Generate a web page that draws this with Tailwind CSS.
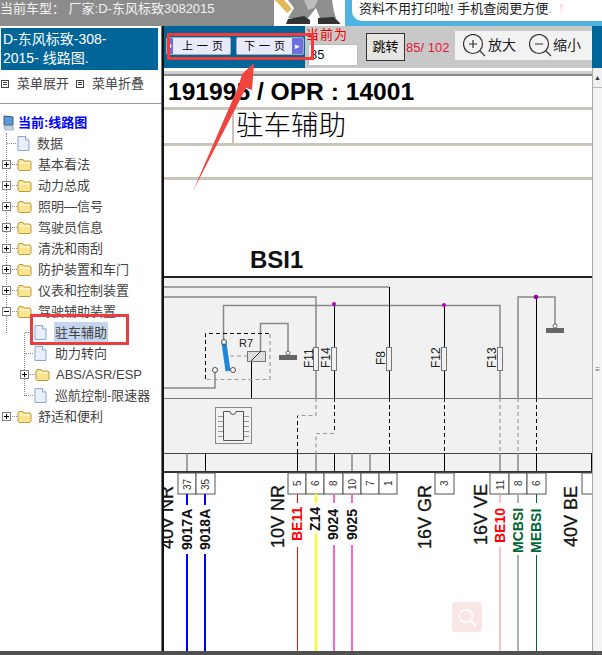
<!DOCTYPE html>
<html lang="en">
<head>
<meta charset="UTF-8" />
<title>线路图</title>
<script src="https://cdn.jsdelivr.net/npm/@tailwindcss/browser@4"></script>
</head>
<body class="relative w-[602px] h-[655px] overflow-hidden bg-white font-['Liberation_Sans','Noto_Sans_CJK_SC',sans-serif]">
  <svg class="hidden">
    <symbol id="folder" viewBox="0 0 15 13">
      <path d="M1 3 L2 1.5 H6 L7 3 H13 L14 4 V11.5 L13 12.5 H2 L1 11.5 Z" fill="#fbe48f" stroke="#c09a35" stroke-width="1"/>
      <path d="M2 5 H13" stroke="#fff6c8" stroke-width="1.5"/>
    </symbol>
    <symbol id="doc" viewBox="0 0 13 15">
      <path d="M1 .5 H8.5 L12 4 V14.5 H1 Z" fill="#e8effa" stroke="#8aa6d2" stroke-width="1"/>
      <path d="M8.5 .5 V4 H12" fill="#fff" stroke="#8aa6d2" stroke-width="1"/>
    </symbol>
    <symbol id="plus" viewBox="0 0 9 9">
      <rect x=".5" y=".5" width="8" height="8" fill="#fff" stroke="#808080"/>
      <path d="M2 4.5 H7 M4.5 2 V7" stroke="#000"/>
    </symbol>
    <symbol id="minus" viewBox="0 0 9 9">
      <rect x=".5" y=".5" width="8" height="8" fill="#fff" stroke="#808080"/>
      <path d="M2 4.5 H7" stroke="#000"/>
    </symbol>
    <symbol id="menu" viewBox="0 0 8 8">
      <rect x=".5" y=".5" width="7" height="7" fill="#fff" stroke="#444"/>
      <path d="M2 2.5 H6 M2 4.5 H6" stroke="#444"/>
    </symbol>
  </svg>

  <!-- top bar -->
  <div class="flex h-[26px]">
    <div class="w-[274px] bg-[#8c8c8c] text-[#f2f2f2] text-[13px] leading-[18px] whitespace-nowrap">当前车型： 厂家:D-东风标致3082015</div>
    <div class="w-[71px] bg-white">
      <svg width="71" height="26" viewBox="0 0 71 26">
        <path d="M0 0 H10 L18 9 L13 13 L4 3 Z" fill="#e2b95a"/>
        <path d="M14 0 H58 L60 12 L62 18 H46 L42 8 L34 18 H14 L20 8 Z" fill="#8e8e8e"/>
        <path d="M30 0 H44 L40 8 L34 10 Z" fill="#bdbdbd"/>
        <path d="M12 24 L14 19 L30 16 L36 20 V24 Z M44 24 V18 L60 17 L66 23 V24 Z" fill="#333"/>
      </svg>
    </div>
    <div class="flex-1 bg-[#4fb2e0] pl-[7px] pb-[5px]">
      <div class="h-full bg-white rounded-bl-[10px] pl-[7px] text-[13px] leading-[17px] text-[#222] whitespace-nowrap">资料不用打印啦! 手机查阅更方便<span class="text-[#aaa]">.</span> <span class="ml-[4px] text-[#f9c0ee]">!</span></div>
    </div>
  </div>

  <div class="flex h-[625px]">
    <!-- left menu -->
    <div class="w-[161px] shrink-0 bg-white">
      <div class="ml-[1px] mt-[2px] w-[157px] h-[42px] bg-[#006699] text-white text-[14px] leading-[19px] pl-[2px] pt-[2px] whitespace-nowrap">D-东风标致-308-<br>2015- 线路图.</div>
      <div class="flex items-center h-[27px] pl-[1px] text-[13px] text-[#444]">
        <svg class="mr-[8px]" width="8" height="8"><use href="#menu"/></svg>菜单展开
        <svg class="ml-[7px] mr-[8px]" width="8" height="8"><use href="#menu"/></svg>菜单折叠
      </div>
      <div class="relative mt-[6px] border-t border-[#999] pt-[8px] text-[13px] leading-[21px] text-[#444] whitespace-nowrap">
        <!-- tree guide lines -->
        <div class="absolute left-[6px] top-[29px] h-[200px] border-l border-dotted border-[#888]"></div>
        <div class="absolute left-[24px] top-[229px] h-[63px] border-l border-dotted border-[#888]"></div>

        <div class="flex items-center h-[21px] pl-[2px] text-[#0000ff] font-bold">
          <svg class="mr-[3px]" width="13" height="16" viewBox="0 0 13 16"><path d="M2 1 L11 2 V10 L2 10 Z" fill="#5b9be0" stroke="#456"/><path d="M2 11 L11 11 L12 15 H3 Z" fill="#c9d4e6" stroke="#8899aa" stroke-width=".6"/></svg>当前:线路图
        </div>
        <div class="relative flex items-center h-[21px] pl-[17px]"><span class="absolute left-[7px] w-[9px] border-t border-dotted border-[#888]"></span><svg class="mr-[7px]" width="13" height="15"><use href="#doc"/></svg>数据</div>
        <div class="flex items-center h-[21px] pl-[2px]"><svg class="relative mr-[1px]" width="9" height="9"><use href="#plus"/></svg><span class="w-[5px] border-t border-dotted border-[#888]"></span><svg class="mr-[6px]" width="15" height="13"><use href="#folder"/></svg>基本看法</div>
        <div class="flex items-center h-[21px] pl-[2px]"><svg class="relative mr-[1px]" width="9" height="9"><use href="#plus"/></svg><span class="w-[5px] border-t border-dotted border-[#888]"></span><svg class="mr-[6px]" width="15" height="13"><use href="#folder"/></svg>动力总成</div>
        <div class="flex items-center h-[21px] pl-[2px]"><svg class="relative mr-[1px]" width="9" height="9"><use href="#plus"/></svg><span class="w-[5px] border-t border-dotted border-[#888]"></span><svg class="mr-[6px]" width="15" height="13"><use href="#folder"/></svg>照明—信号</div>
        <div class="flex items-center h-[21px] pl-[2px]"><svg class="relative mr-[1px]" width="9" height="9"><use href="#plus"/></svg><span class="w-[5px] border-t border-dotted border-[#888]"></span><svg class="mr-[6px]" width="15" height="13"><use href="#folder"/></svg>驾驶员信息</div>
        <div class="flex items-center h-[21px] pl-[2px]"><svg class="relative mr-[1px]" width="9" height="9"><use href="#plus"/></svg><span class="w-[5px] border-t border-dotted border-[#888]"></span><svg class="mr-[6px]" width="15" height="13"><use href="#folder"/></svg>清洗和雨刮</div>
        <div class="flex items-center h-[21px] pl-[2px]"><svg class="relative mr-[1px]" width="9" height="9"><use href="#plus"/></svg><span class="w-[5px] border-t border-dotted border-[#888]"></span><svg class="mr-[6px]" width="15" height="13"><use href="#folder"/></svg>防护装置和车门</div>
        <div class="flex items-center h-[21px] pl-[2px]"><svg class="relative mr-[1px]" width="9" height="9"><use href="#plus"/></svg><span class="w-[5px] border-t border-dotted border-[#888]"></span><svg class="mr-[6px]" width="15" height="13"><use href="#folder"/></svg>仪表和控制装置</div>
        <div class="flex items-center h-[21px] pl-[2px]"><svg class="relative mr-[1px]" width="9" height="9"><use href="#minus"/></svg><span class="w-[5px] border-t border-dotted border-[#888]"></span><svg class="mr-[6px]" width="15" height="13"><use href="#folder"/></svg>驾驶辅助装置</div>
        <div class="relative flex items-center h-[21px] pl-[34px]"><span class="absolute left-[25px] w-[8px] border-t border-dotted border-[#888]"></span><svg class="mr-[7px]" width="13" height="15"><use href="#doc"/></svg><span class="bg-[#c5d5ee] px-[1px]">驻车辅助</span>
          <div class="absolute left-[30px] -top-[8px] w-[99px] h-[31px] border-[3px] border-[#ee3b3b]"></div>
        </div>
        <div class="relative flex items-center h-[21px] pl-[34px]"><span class="absolute left-[25px] w-[8px] border-t border-dotted border-[#888]"></span><svg class="mr-[8px]" width="13" height="15"><use href="#doc"/></svg>助力转向</div>
        <div class="flex items-center h-[21px] pl-[20px]"><svg class="relative mr-[1px]" width="9" height="9"><use href="#plus"/></svg><span class="w-[5px] border-t border-dotted border-[#888]"></span><svg class="mr-[6px]" width="15" height="13"><use href="#folder"/></svg>ABS/ASR/ESP</div>
        <div class="relative flex items-center h-[21px] pl-[34px]"><span class="absolute left-[25px] w-[8px] border-t border-dotted border-[#888]"></span><svg class="mr-[8px]" width="13" height="15"><use href="#doc"/></svg>巡航控制-限速器</div>
        <div class="flex items-center h-[21px] pl-[2px]"><svg class="relative mr-[1px]" width="9" height="9"><use href="#plus"/></svg><span class="w-[5px] border-t border-dotted border-[#888]"></span><svg class="mr-[6px]" width="15" height="13"><use href="#folder"/></svg>舒适和便利</div>
      </div>
    </div>

    <div class="w-[1px] bg-[#777]"></div>
    <div class="w-[2px] bg-[#111]"></div>

    <!-- right side -->
    <div class="flex-1 flex flex-col relative">
      <!-- toolbar -->
      <div class="flex h-[42px]">
        <div class="w-[141px] bg-[#006699] pt-[11px] pl-[2px] flex gap-[5px]">
          <div class="relative w-[65px] h-[18px] pl-[12px] flex bg-[#e8eafa] border border-[#aab] rounded-[2px] overflow-hidden">
            <span class="absolute left-0 top-0 w-[6px] h-full bg-[#6a70e0] text-white text-[8px] leading-[16px]">◂</span>
            <span class="flex-1 text-[11px] leading-[16px] text-center tracking-[4px]">上一页</span>
          </div>
          <div class="relative w-[68px] h-[18px] pl-[4px] pr-[11px] flex bg-[#e8eafa] border border-[#aab] rounded-[2px] overflow-hidden">
            <span class="flex-1 text-[11px] leading-[16px] text-center tracking-[4px] whitespace-nowrap">下一页</span>
            <span class="absolute right-0 top-0 w-[11px] h-full bg-[#6a70e0] text-white text-center text-[9px] leading-[16px]">▸</span>
          </div>
        </div>
        <div class="flex-1 bg-[#c8c8c8] flex">
          <div class="w-[61px] pl-[1px]">
            <div class="text-[13px] leading-[14px] text-[#ee0000] tracking-[1px] h-[18px] pt-[2px] whitespace-nowrap">当前为</div>
            <div class="ml-[2px] w-[50px] h-[22px] bg-white border border-[#bbb] text-[13px] leading-[20px] pl-[1px] text-[#112]">85</div>
          </div>
          <div class="w-[39px] h-[28px] mt-[7px] bg-[#e8e6e2] border border-[#333] text-[13px] leading-[25px] text-center">跳转</div>
          <div class="w-[50px] text-[#ee1133] text-[13px] leading-[16px] pt-[14px] pl-[1px] whitespace-nowrap">85/ 102</div>
          <div class="flex-1 mt-[5px] mb-[8px] bg-[#f2f2f2] flex items-center text-[14px] text-[#222] pl-[8px]">
            <svg width="23" height="23" viewBox="0 0 23 23" fill="none" stroke="#333" stroke-width="1.2"><circle cx="10" cy="10" r="9.5"/><path d="M6 10 H14 M10 6 V14 M17 17 L22 22"/></svg>
            <span class="ml-[2px]">放大</span>
            <svg class="ml-[13px]" width="23" height="23" viewBox="0 0 23 23" fill="none" stroke="#333" stroke-width="1.2"><circle cx="10" cy="10" r="9.5"/><path d="M6 10 H14 M17 17 L22 22"/></svg>
            <span class="ml-[1px]">缩小</span>
          </div>
        </div>
        <div class="w-[10px] bg-[#006699]"></div>
      </div>

      <div class="flex flex-1 min-h-0">
        <!-- drawing -->
        <svg width="428" height="583" viewBox="164 68 428 583" class="block shrink-0" style="font-family:'Liberation Sans',sans-serif">
          <rect x="164" y="68" width="428" height="583" fill="#fff"/>
          <rect x="164" y="71" width="428" height="3" fill="#cfcfcf"/>
          <rect x="164" y="74" width="428" height="2" fill="#8a8a8a"/>
          <text x="168" y="100" font-size="24.6" font-weight="bold" fill="#000">191995 / OPR : 14001</text>
          <rect x="164" y="107" width="428" height="3" fill="#c9c5bd"/>
          <rect x="232" y="110" width="2" height="34" fill="#c9c5bd"/>
          <text x="236" y="135" font-size="27.5" fill="#000" style="font-family:'Noto Sans CJK SC',sans-serif;font-weight:300">驻车辅助</text>
          <rect x="164" y="143" width="428" height="3" fill="#c9c5bd"/>
          <rect x="164" y="177" width="428" height="3" fill="#c9c5bd"/>
          <text x="250" y="268" font-size="24" font-weight="bold" fill="#111">BSI1</text>

          <rect x="164" y="278" width="428" height="195" fill="#f1f1f1"/>
          <path d="M164 277 H592" stroke="#222" stroke-width="2"/>
          <path d="M164 398.5 H592" stroke="#777"/>
          <path d="M164 453.5 H592" stroke="#444"/>

          <g fill="none" stroke="#888" stroke-width="1.5">
            <path d="M164 287 H389"/>
            <path d="M164 297 H316 V398"/>
            <path d="M223.5 342 V305.5 H500 V398"/>
            <path d="M518 398 V297 H555 V325"/>
            <path d="M260.5 352 V323.5 H288 V352"/>
            <path d="M164 388 H215 V372"/>
            <path d="M316 453 V473 M352 453 V473 M370 453 V473 M187 453 V473 M500 453 V473 M518 453 V473"/>
          </g>
          <g fill="none" stroke="#000">
            <path d="M389.5 287 V398"/>
            <path d="M334.5 305 V398"/>
            <path d="M444.5 305 V398"/>
            <path d="M536.5 297 V398"/>
            <path d="M251.5 361 V398"/>
            <path d="M205.5 453 V473 M297.5 453 V473 M334.5 453 V473 M444.5 453 V473 M536.5 453 V473 M389.5 453 V473 M591.5 453 V473"/>
          </g>
          <g fill="none" stroke="#000" stroke-dasharray="4 3">
            <path d="M389.5 398 V453 M444.5 398 V453 M536.5 398 V453 M334.5 398 V433"/>
            <path d="M297.5 453 V416"/>
            <path d="M205.5 379 V333.5 H270"/>
          </g>
          <g fill="none" stroke="#999" stroke-width="1.2" stroke-dasharray="4 3">
            <path d="M270 334 V379.5 H205"/>
            <path d="M230 356 H247"/>
            <path d="M518 398 V453"/>
            <path d="M316 398 V415.5 H297"/>
            <path d="M334 433.5 H316 V453"/>
            <path d="M500 398 V453" stroke="#999"/>
          </g>
          <!-- R7 relay -->
          <text x="239" y="347" font-size="11" fill="#222">R7</text>
          <rect x="247.5" y="351.5" width="18" height="10" fill="#ddd" stroke="#777"/>
          <path d="M251 361 L261 351" stroke="#333"/>
          <path d="M224 343 L228 371" stroke="#1f86d8" stroke-width="5"/>
          <circle cx="224" cy="342" r="2.5" fill="#fff" stroke="#222" stroke-width=".8"/>
          <circle cx="233" cy="370" r="2.5" fill="#fff" stroke="#222" stroke-width=".8"/>
          <circle cx="215" cy="370" r="2.5" fill="#fff" stroke="#222" stroke-width=".8"/>
          <!-- earth -->
          <circle cx="288" cy="353" r="2" fill="#fff" stroke="#333" stroke-width=".7"/>
          <rect x="279" y="355" width="18" height="5" fill="#666"/>
          <circle cx="555" cy="326" r="2" fill="#fff" stroke="#333" stroke-width=".7"/>
          <rect x="546" y="328" width="18" height="5" fill="#666"/>
          <!-- fuses -->
          <g fill="#f1f1f1" stroke="#777">
            <rect x="313.5" y="347.5" width="5" height="23"/>
            <rect x="331.5" y="347.5" width="5" height="23"/>
            <rect x="386.5" y="347.5" width="5" height="23"/>
            <rect x="441.5" y="347.5" width="5" height="23"/>
            <rect x="497.5" y="347.5" width="5" height="23"/>
          </g>
          <g font-size="12" fill="#222">
            <text transform="translate(312.5 368) rotate(-90)">F11</text>
            <text transform="translate(330 368) rotate(-90)">F14</text>
            <text transform="translate(385 365) rotate(-90)">F8</text>
            <text transform="translate(440 368) rotate(-90)">F12</text>
            <text transform="translate(495.5 368) rotate(-90)">F13</text>
          </g>
          <circle cx="334" cy="304" r="2" fill="#c000c0"/>
          <circle cx="444" cy="305" r="2" fill="#c000c0"/>
          <circle cx="536" cy="297" r="2.3" fill="#a000a0"/>
          <!-- chip -->
          <rect x="215.5" y="407.5" width="36" height="36" fill="none" stroke="#888"/>
          <path d="M223.5 411.5 H230 A3 3 0 0 0 236 411.5 H243.5 V440.5 H223.5 Z" fill="none" stroke="#555"/>
          <path d="M218 416.5 H223 M218 421.5 H223 M218 426.5 H223 M218 431.5 H223 M218 436.5 H223 M244 416.5 H249 M244 421.5 H249 M244 426.5 H249 M244 431.5 H249 M244 436.5 H249" stroke="#999"/>

          <!-- connector -->
          <path d="M164 472 H592" stroke="#333" stroke-width="2"/>
          <g fill="#fff" stroke="#555">
            <rect x="178" y="473" width="18" height="21"/><rect x="196" y="473" width="19" height="21"/>
            <rect x="288" y="473" width="18" height="21"/><rect x="306" y="473" width="18" height="21"/><rect x="324" y="473" width="19" height="21"/><rect x="343" y="473" width="18" height="21"/><rect x="361" y="473" width="18" height="21"/><rect x="379" y="473" width="18" height="21"/>
            <rect x="435" y="473" width="19" height="21"/>
            <rect x="490" y="473" width="19" height="21"/><rect x="509" y="473" width="18" height="21"/><rect x="527" y="473" width="19" height="21"/>
            <rect x="582" y="473" width="12" height="21"/>
          </g>
          <g font-size="10" fill="#333">
            <text transform="translate(191 490) rotate(-90)">37</text><text transform="translate(209 490) rotate(-90)">35</text>
            <text transform="translate(301 486) rotate(-90)">5</text><text transform="translate(319 486) rotate(-90)">6</text><text transform="translate(337 486) rotate(-90)">8</text><text transform="translate(356 490) rotate(-90)">10</text><text transform="translate(374 486) rotate(-90)">7</text><text transform="translate(392 486) rotate(-90)">1</text>
            <text transform="translate(448 486) rotate(-90)">3</text>
            <text transform="translate(504 490) rotate(-90)">11</text><text transform="translate(522 486) rotate(-90)">8</text><text transform="translate(540 486) rotate(-90)">6</text>
          </g>
          <!-- wires -->
          <path d="M187 494 V651 M205 494 V651" stroke="#0000ff" stroke-width="2"/>
          <path d="M297.5 494 V651" stroke="#ee1111"/>
          <path d="M316 494 V651" stroke="#ffff00" stroke-width="2"/>
          <path d="M334 494 V651 M352 494 V651" stroke="#ff66cc" stroke-width="2"/>
          <path d="M500 494 V651" stroke="#f08a8a"/>
          <path d="M518 494 V651" stroke="#a9b5ae" stroke-width="2"/>
          <path d="M536.5 494 V651" stroke="#006633"/>
          <!-- wire labels -->
          <g font-size="14" font-weight="bold">
            <rect x="180" y="505" width="14" height="49" fill="#fff"/><rect x="198" y="505" width="14" height="49" fill="#fff"/>
            <rect x="290" y="503" width="14" height="44" fill="#fff"/><rect x="309" y="503" width="14" height="30" fill="#fff"/><rect x="327" y="503" width="14" height="42" fill="#fff"/><rect x="345" y="503" width="14" height="42" fill="#fff"/>
            <rect x="493" y="503" width="14" height="44" fill="#fff"/><rect x="511" y="503" width="14" height="52" fill="#fff"/><rect x="529" y="503" width="14" height="52" fill="#fff"/>
            <text transform="translate(192 550) rotate(-90)" fill="#111">9017A</text>
            <text transform="translate(210 550) rotate(-90)" fill="#111">9018A</text>
            <text transform="translate(302 541) rotate(-90)" fill="#ff0000">BE11</text>
            <text transform="translate(320 531) rotate(-90)" fill="#111">Z14</text>
            <text transform="translate(338 540) rotate(-90)" fill="#111">9024</text>
            <text transform="translate(357 540) rotate(-90)" fill="#111">9025</text>
            <text transform="translate(505 543) rotate(-90)" fill="#ff0000">BE10</text>
            <text transform="translate(523 553) rotate(-90)" fill="#006633">MCBSI</text>
            <text transform="translate(541 553) rotate(-90)" fill="#006633">MEBSI</text>
          </g>
          <g font-size="18" fill="#111" stroke="#111" stroke-width=".3">
            <text transform="translate(173 549) rotate(-90)">40V NR</text>
            <text transform="translate(284 548) rotate(-90)">10V NR</text>
            <text transform="translate(431 549) rotate(-90)">16V GR</text>
            <text transform="translate(486.5 545) rotate(-90)">16V VE</text>
            <text transform="translate(577 547) rotate(-90)">40V BE</text>
          </g>
          <!-- floating search button -->
          <rect x="452" y="602" width="30" height="30" rx="4" fill="#fbe6e6"/>
          <circle cx="466" cy="616" r="6.5" fill="none" stroke="#fff" stroke-width="1.5"/>
          <path d="M471 621 L476 626" stroke="#fff" stroke-width="2"/>
        </svg>
        <!-- scrollbar -->
        <div class="flex-1 flex flex-col bg-[#f0f0f0] border-l border-[#aaa]">
          <div class="h-[19px] text-center text-[7px] leading-[19px] text-[#333]">▲</div>
          <div class="flex-1 flex items-center justify-center bg-[#f4f4f4] border-t border-[#bbb] text-[8px] text-[#666]">≡</div>
        </div>
      </div>

      <!-- red annotations over the page -->
      <div class="absolute left-[3px] top-[7px] w-[147px] h-[27px] border-[3px] border-[#ee3b3b]"></div>
      <svg class="absolute left-0 top-0 pointer-events-none" width="120" height="170" viewBox="164 26 120 170">
        <path d="M193 191 L239 85 L242 74 L254 63 L252 90 L246 88 Z" fill="#f0443e"/>
      </svg>
    </div>
  </div>
  <!-- bottom bar -->
  <div class="h-[4px] bg-[#505050]"></div>
</body>
</html>
